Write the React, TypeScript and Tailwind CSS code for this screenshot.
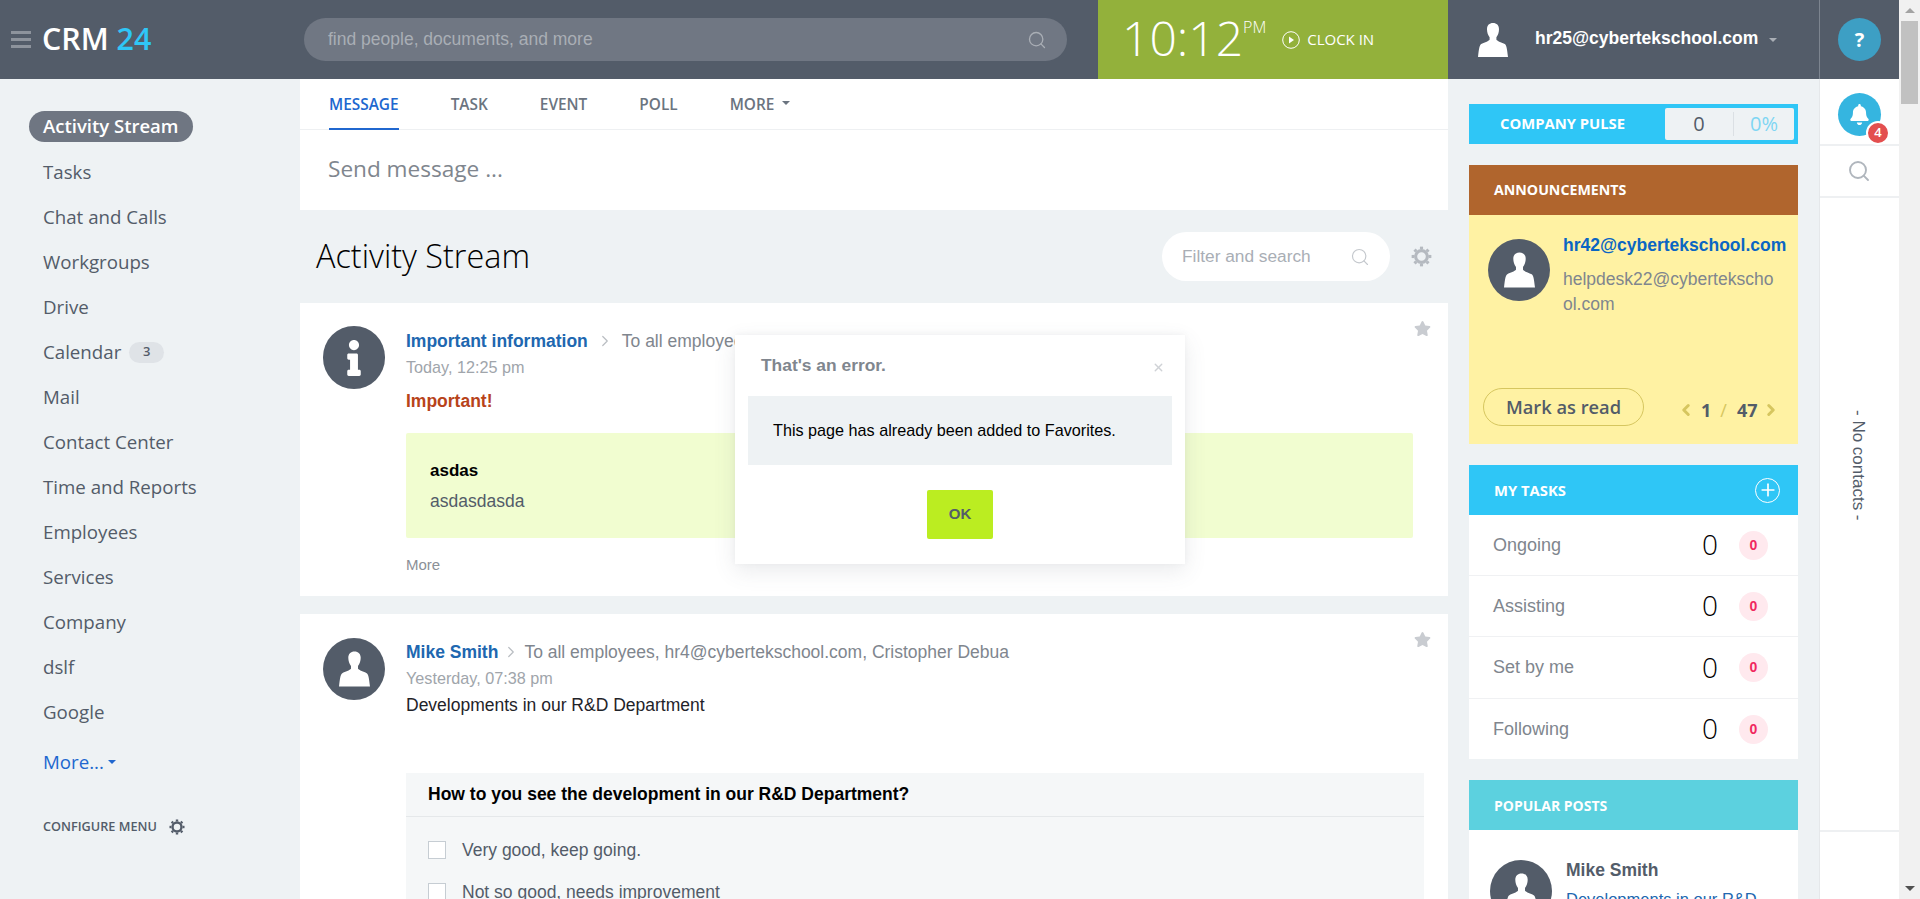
import React from 'react';
import { Search, ChevronLeft, ChevronRight, Plus, X } from 'lucide-react';
import { FaBell, FaInfo, FaStar } from 'react-icons/fa';

const NAV = ['Tasks', 'Chat and Calls', 'Workgroups', 'Drive', 'Calendar', 'Mail', 'Contact Center', 'Time and Reports', 'Employees', 'Services', 'Company', 'dslf', 'Google'];
const TASKS = [
  { label: 'Ongoing', h: 'h-[61px]' },
  { label: 'Assisting', h: 'h-[61px]' },
  { label: 'Set by me', h: 'h-[62px]' },
  { label: 'Following', h: 'h-[60px]' },
];
const open = "font-['Open_Sans',sans-serif]";
const arial = "font-['Liberation_Sans',Arial,sans-serif]";
const TEETH = [0, 45, 90, 135, 180, 225, 270, 315];

const Person: React.FC<{ className?: string }> = ({ className }) => (
  <svg viewBox="0 0 30 34" className={className} fill="currentColor">
    <path d="M15 0c-3.6 0-6 2.2-6 6.2 0 3 1 6 2.6 8v2.6c-1 1.4-5.6 3-8.4 4.2C1.6 22 1 25 0 34h30c-1-9-1.6-12-3.2-13-2.8-1.2-7.4-2.8-8.4-4.2v-2.6c1.6-2 2.6-5 2.6-8C21 2.2 18.6 0 15 0z" />
  </svg>
);

const Cog: React.FC<{ className?: string }> = ({ className }) => (
  <svg viewBox="0 0 20 20" className={className} fill="none" stroke="currentColor">
    <circle cx="10" cy="10" r="5.6" strokeWidth="3" />
    {TEETH.map(a => (
      <line key={a} x1="10" y1="3" x2="10" y2="0.6" strokeWidth="3" transform={`rotate(${a} 10 10)`} />
    ))}
  </svg>
);

const Avatar: React.FC = () => (
  <div className="w-[62px] h-[62px] shrink-0 rounded-full bg-[#535c69] flex items-center justify-center text-white">
    <Person className="w-[31px] h-[36px]" />
  </div>
);

const Caret: React.FC<{ className: string }> = ({ className }) => (
  <span className={`inline-block w-0 h-0 border-x-[4px] border-x-transparent border-t-[4px] ${className}`} />
);

const Header: React.FC = () => (
  <header className="h-[79px] shrink-0 bg-[#535c69] flex items-stretch">
    <div className="w-[304px] shrink-0 flex items-center pl-[11px]">
      <div className="w-[20px] flex flex-col gap-[4px]">
        <div className="h-[3px] bg-[#8d939c]" />
        <div className="h-[3px] bg-[#8d939c]" />
        <div className="h-[3px] bg-[#8d939c]" />
      </div>
      <div className={`${open} ml-[11px] text-[30.4px] font-semibold text-white leading-none`}>
        CRM <span className="text-[#2fc6f6]">24</span>
      </div>
    </div>
    <div className="w-[794px] shrink-0 flex items-center">
      <div className="w-[763px] h-[43px] rounded-[22px] bg-[#707783] flex items-center justify-between pl-[24px] pr-[20px]">
        <span className={`${arial} text-[17.5px] text-[#a9aeb5]`}>find people, documents, and more</span>
        <Search size={20} strokeWidth={1.6} className="text-[#a9aeb5]" />
      </div>
    </div>
    <div className={`${open} w-[350px] shrink-0 bg-[#93b13b] text-white flex items-center pl-[24px]`}>
      <span className="text-[48px] font-light leading-none -mt-[3px]">10:12</span>
      <span className="text-[16px] font-light self-start mt-[15px]">PM</span>
      <svg viewBox="0 0 18 18" className="w-[18px] h-[18px] ml-[16px]" fill="none" stroke="currentColor">
        <circle cx="9" cy="9" r="8.3" />
        <path d="M7 5.5l5 3.5-5 3.5z" fill="currentColor" stroke="none" />
      </svg>
      <span className="text-[15px] ml-[7px]">CLOCK IN</span>
    </div>
    <div className="w-[371px] shrink-0 flex items-center pl-[30px] text-white">
      <Person className="w-[30px] h-[34px]" />
      <span className={`${arial} ml-[27px] text-[17.5px] font-bold -mt-[2px]`}>hr25@cybertekschool.com</span>
      <Caret className="ml-[11px] border-t-[#a9aeb5]" />
    </div>
    <div className="w-[80px] shrink-0 border-l border-[#7c848f] flex items-center justify-center">
      <div className={`${open} w-[43px] h-[43px] rounded-full bg-[#3d9fc4] text-white font-bold text-[20px] flex items-center justify-center`}>?</div>
    </div>
  </header>
);

const Sidebar: React.FC = () => (
  <aside className={`${open} w-[300px] shrink-0 pt-[25px] text-[18.7px] text-[#535c69]`}>
    <div className="h-[45px] flex items-center pl-[29px]">
      <span className="h-[31px] w-[164px] rounded-[16px] bg-[#6f7682] text-white text-[18.5px] font-semibold flex items-center pl-[14px] pb-[2px]">Activity Stream</span>
    </div>
    {NAV.map(item => (
      <div key={item} className="h-[45px] flex items-center pl-[43px] pt-px">
        {item}
        {item === 'Calendar' && (
          <span className="ml-[8px] w-[35px] h-[21px] rounded-full bg-[#dfe3e7] text-[13px] font-semibold flex items-center justify-center">3</span>
        )}
      </div>
    ))}
    <div className="mt-[5px] h-[45px] flex items-center pl-[43px] pt-px text-[#2067cf]">
      More...
      <Caret className="ml-[4px] border-t-[#2067cf]" />
    </div>
    <div className="mt-[33px] h-[20px] flex items-center pl-[43px] text-[12.7px] font-semibold">
      CONFIGURE MENU
      <Cog className="ml-[12px] w-[16px] h-[16px]" />
    </div>
  </aside>
);

const PostHead: React.FC<{ title: string; to: string; time: string; gap: string }> = ({ title, to, time, gap }) => (
  <>
    <div className="h-[22px] flex items-center text-[17.5px] whitespace-nowrap">
      <span className="font-bold text-[#2067b0]">{title}</span>
      <ChevronRight size={18} strokeWidth={1.6} className={`text-[#b9bdc2] ${gap}`} />
      <span className="text-[#80868e]">{to}</span>
    </div>
    <div className="mt-[5px] h-[20px] flex items-center text-[16.2px] text-[#a0a5ab]">{time}</div>
  </>
);

const Main: React.FC = () => (
  <main className="w-[1148px] shrink-0">
    <div className="bg-white h-[131px]">
      <div className={`${open} h-[51px] border-b border-[#eef0f2] flex items-stretch pl-[29px] gap-[52px] text-[15.4px] font-semibold text-[#6b7480]`}>
        <span className="flex items-center border-b-2 border-[#2067cf] text-[#2067cf] -mb-px pt-[2px]">MESSAGE</span>
        <span className="flex items-center pt-[2px]">TASK</span>
        <span className="flex items-center pt-[2px]">EVENT</span>
        <span className="flex items-center pt-[2px]">POLL</span>
        <span className="flex items-center pt-[2px]">MORE<Caret className="ml-[8px] -mt-[4px] border-t-[#6b7480]" /></span>
      </div>
      <div className={`${open} h-[80px] flex items-center pl-[28px] pb-[2px] text-[22.6px] text-[#80868e]`}>Send message ...</div>
    </div>

    <div className="h-[93px] flex items-center justify-between pl-[16px] pr-[16px]">
      <h1 className={`${open} text-[32.4px] font-light text-black -mt-[2px]`}>Activity Stream</h1>
      <div className="flex items-center gap-[21px]">
        <div className="w-[228px] h-[49px] rounded-full bg-white flex items-center justify-between pl-[20px] pr-[20px]">
          <span className={`${arial} text-[17.3px] text-[#a9aeb5]`}>Filter and search</span>
          <Search size={20} strokeWidth={1.4} className="text-[#c4c8cd]" />
        </div>
        <Cog className="w-[21px] h-[21px] text-[#b5bac0]" />
      </div>
    </div>

    <article className={`${arial} relative bg-white h-[293px] mb-[18px] pl-[23px] pt-[23px] flex gap-[21px]`}>
      <div className="w-[62px] h-[63px] shrink-0 rounded-full bg-[#535c69] flex items-center justify-center text-white">
        <FaInfo className="w-[20px] h-[36px]" />
      </div>
      <div className="pt-[4px] flex-1">
        <PostHead title="Important information" to="To all employees" time="Today, 12:25 pm" gap="mx-[8px]" />
        <div className="mt-[13px] h-[22px] flex items-center text-[17.5px] font-bold text-[#b8431a]">Important!</div>
        <div className="mt-[21px] w-[1007px] h-[105px] rounded-[2px] bg-[#f1fdd0] px-[24px] pt-[28px]">
          <div className="h-[20px] flex items-center text-[17px] font-bold text-black">asdas</div>
          <div className="mt-[10px] h-[20px] flex items-center text-[17.5px] text-[#535c69]">asdasdasda</div>
        </div>
        <div className="mt-[17px] h-[20px] flex items-center text-[15px] text-[#8b9097]">More</div>
      </div>
      <FaStar size={17} className="absolute top-[17px] right-[17px] text-[#c9ccd1]" />
    </article>

    <article className={`${arial} relative bg-white h-[400px] pl-[23px] pt-[24px] flex gap-[21px]`}>
      <Avatar />
      <div className="pt-[3px] flex-1">
        <PostHead title="Mike Smith" to="To all employees, hr4@cybertekschool.com, Cristopher Debua" time="Yesterday, 07:38 pm" gap="mx-[4px]" />
        <div className="mt-[7px] h-[20px] flex items-center text-[17.5px] text-[#1f2329]">Developments in our R&amp;D Department</div>
        <div className="mt-[58px] w-[1018px] bg-[#f5f7f8] h-[200px]">
          <div className="h-[44px] border-b border-[#e5e8ea] flex items-center pl-[22px] text-[17.5px] font-bold text-black">How to you see the development in our R&amp;D Department?</div>
          <div className="pt-[23px] pl-[22px] text-[#535c69] text-[17.5px]">
            <div className="h-[20px] flex items-center gap-[16px]">
              <span className="w-[18px] h-[18px] border border-[#c6cdd3] bg-white" />
              Very good, keep going.
            </div>
            <div className="mt-[22px] h-[20px] flex items-center gap-[16px]">
              <span className="w-[18px] h-[18px] border border-[#c6cdd3] bg-white" />
              Not so good, needs improvement
            </div>
          </div>
        </div>
      </div>
      <FaStar size={17} className="absolute top-[17px] right-[17px] text-[#c9ccd1]" />
    </article>
  </main>
);

const Widgets: React.FC = () => (
  <section className={`${arial} w-[371px] shrink-0 pl-[21px] pr-[21px] pt-[25px]`}>
    <div className="h-[40px] bg-[#2fc6f6] flex items-center justify-between pl-[31px] pr-[4px]">
      <span className={`${open} text-[14.8px] font-bold text-white -mt-px`}>COMPANY PULSE</span>
      <div className="w-[129px] h-[32px] rounded-[2px] bg-[#eef2f4] flex items-center text-[20px]">
        <span className={`${open} w-[68px] text-center text-[#535c69]`}>0</span>
        <span className="w-px h-[24px] bg-[#dbe0e4]" />
        <span className={`${open} flex-1 text-center text-[#7fd6f3]`}>0%</span>
      </div>
    </div>

    <div className="mt-[21px] h-[279px] bg-[#fff2a3] flex flex-col">
      <div className={`${open} h-[50px] bg-[#b0652d] flex items-center pl-[25px] text-[14.2px] font-bold text-white`}>ANNOUNCEMENTS</div>
      <div className="flex pl-[19px] pt-[24px] gap-[13px]">
        <Avatar />
        <div className="w-[216px] -mt-[6px]">
          <div className="h-[24px] flex items-center text-[17.5px] font-bold text-[#0b66c3] whitespace-nowrap">hr42@cybertekschool.com</div>
          <div className="mt-[10px] text-[17.5px] leading-[25px] text-[#80868e] break-all">helpdesk22@cybertekschool.com</div>
        </div>
      </div>
      <div className="mt-auto mb-[18px] pl-[14px] flex items-center">
        <div className={`${open} w-[161px] h-[38px] rounded-full border border-[#d6c65f] flex items-center justify-center text-[18.3px] font-semibold text-[#535c69]`}>Mark as read</div>
        <div className={`${open} ml-[33px] mt-[6px] flex items-center text-[18px] font-bold text-[#535c69]`}>
          <ChevronLeft size={18} strokeWidth={4} className="text-[#d6c65f]" />
          <span className="ml-[6px]">1</span>
          <span className="ml-[9px] text-[#d6c65f] font-normal">/</span>
          <span className="ml-[10px]">47</span>
          <ChevronRight size={18} strokeWidth={4} className="ml-[4px] text-[#d6c65f]" />
        </div>
      </div>
    </div>

    <div className="mt-[21px] bg-white">
      <div className={`${open} h-[50px] bg-[#2fc6f6] flex items-center justify-between pl-[25px] pr-[18px] text-[14.8px] font-bold text-white`}>
        MY TASKS
        <span className="w-[25px] h-[25px] rounded-full border border-white flex items-center justify-center">
          <Plus size={20} strokeWidth={2} />
        </span>
      </div>
      {TASKS.map(t => (
        <div key={t.label} className={`${t.h} border-b last:border-b-0 border-[#f0f1f3] flex items-center pl-[24px] text-[18px] text-[#80868e]`}>
          <span className="flex-1">{t.label}</span>
          <span className={`${open} w-[30px] text-center text-[28px] font-light text-black leading-none -mt-[2px]`}>0</span>
          <span className="ml-[14px] mr-[30px] w-[29px] h-[29px] rounded-full bg-[#ffe9ee] text-[#f0285f] text-[14px] font-bold flex items-center justify-center">0</span>
        </div>
      ))}
    </div>

    <div className="mt-[21px] bg-white h-[200px]">
      <div className={`${open} h-[50px] bg-[#5cd1df] flex items-center pl-[25px] text-[14px] font-bold text-white`}>POPULAR POSTS</div>
      <div className="flex pl-[21px] pt-[30px] gap-[14px]">
        <Avatar />
        <div>
          <div className="h-[20px] flex items-center text-[17.5px] font-bold text-[#535c69]">Mike Smith</div>
          <div className="mt-[7px] text-[16.5px] text-[#2067b0]">Developments in our R&amp;D</div>
        </div>
      </div>
    </div>
  </section>
);

const Rail: React.FC = () => (
  <aside className="w-[80px] shrink-0 bg-white border-l border-[#e5e8ea]">
    <div className="h-[67px] border-b-2 border-[#eef0f2] flex justify-center pt-[14px]">
      <div className="relative w-[43px] h-[43px] rounded-full bg-[#35b5e0] flex items-center justify-center text-white">
        <FaBell size={21} />
        <span className={`${open} absolute -right-[9px] bottom-[-9px] w-[24px] h-[24px] rounded-full bg-[#e34f4f] border-2 border-white flex items-center justify-center text-[13px] font-semibold`}>4</span>
      </div>
    </div>
    <div className="h-[52px] border-b-2 border-[#eef0f2] flex items-center justify-center pr-[2px]">
      <Search size={24} strokeWidth={1.9} className="text-[#b0b6bd]" />
    </div>
    <div className="h-[634px] border-b-2 border-[#eef0f2] flex justify-center pt-[212px] pr-[2px]">
      <span className={`${arial} [writing-mode:vertical-rl] text-[17px] text-[#535c69] h-fit`}>- No contacts -</span>
    </div>
  </aside>
);

const Scrollbar: React.FC = () => (
  <div className="w-[21px] shrink-0 bg-[#f1f1f1] flex flex-col items-center">
    <span className="mt-[8px] w-0 h-0 border-x-[5px] border-x-transparent border-b-[5px] border-b-[#a3a3a3]" />
    <div className="mt-[8px] w-[17px] h-[83px] bg-[#c1c1c1]" />
    <span className="mt-auto mb-[8px] w-0 h-0 border-x-[5px] border-x-transparent border-t-[5px] border-t-[#505050]" />
  </div>
);

const ErrorPopup: React.FC = () => (
  <div className={`${arial} absolute left-[735px] top-[335px] w-[450px] h-[229px] bg-white shadow-[0_7px_21px_rgba(83,92,105,0.12),0_-1px_6px_rgba(83,92,105,0.06)]`}>
    <div className="h-[61px] flex items-center justify-between pl-[26px] pr-[20px]">
      <span className="text-[17.4px] font-bold text-[#80868e]">That's an error.</span>
      <X size={13} strokeWidth={2.5} className="text-[#cfd2d6] mt-[3px]" />
    </div>
    <div className="mx-[13px] h-[69px] bg-[#eef2f4] flex items-center pl-[25px] text-[16.2px] text-black">This page has already been added to Favorites.</div>
    <div className="mt-[25px] flex justify-center">
      <div className="w-[66px] h-[49px] rounded-[2px] bg-[#bbed21] flex items-center justify-center text-[15px] font-bold text-[#535c69]">OK</div>
    </div>
  </div>
);

export default function App() {
  return (
    <div className="relative h-[899px] w-[1920px] overflow-hidden flex bg-[#eef2f4]">
      <div className="w-[1899px] shrink-0 flex flex-col">
        <Header />
        <div className="flex flex-1 overflow-hidden">
          <Sidebar />
          <Main />
          <Widgets />
          <Rail />
        </div>
      </div>
      <Scrollbar />
      <ErrorPopup />
    </div>
  );
}
